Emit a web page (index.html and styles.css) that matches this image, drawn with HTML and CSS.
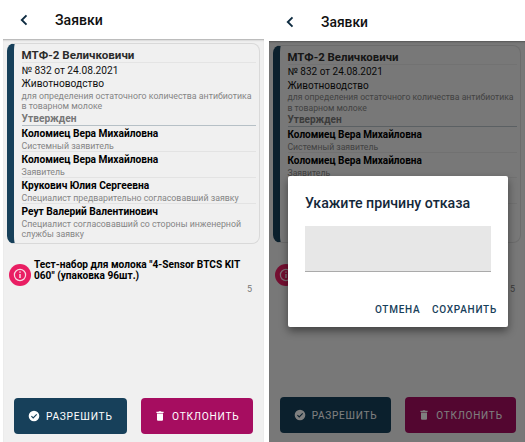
FILE: index.html
```html
<!DOCTYPE html>
<html lang="ru">
<head>
<meta charset="utf-8">
<title>Заявки</title>
<link rel="stylesheet" href="styles.css">
</head>
<body>
<main class="screens">
  <section class="phone">
    <header class="bar">
      <svg class="back" viewBox="0 0 8 12"><path d="M6.5 1.3 1.8 6l4.7 4.7"/></svg>
      <h1>Заявки</h1>
    </header>
    <div class="content">
      <article class="card">
        <h2 class="title"><span>МТФ-2 Величковичи</span></h2>
        <p class="line number"><span>№ 832 от 24.08.2021</span></p>
        <p class="line branch"><span>Животноводство</span></p>
        <p class="note purpose"><span>для определения остаточного количества антибиотика<br>в товарном молоке</span></p>
        <p class="status"><span>Утвержден</span></p>
        <div class="person"><b>Коломиец Вера Михайловна</b><p class="note">Системный заявитель</p></div>
        <div class="person"><b>Коломиец Вера Михайловна</b><p class="note">Заявитель</p></div>
        <div class="person"><b>Крукович Юлия Сергеевна</b><p class="note">Специалист предварительно согласовавший заявку</p></div>
        <div class="person last"><b>Реут Валерий Валентинович</b><p class="note">Специалист согласовавший со стороны инженерной<br>службы заявку</p></div>
      </article>
      <div class="item">
        <svg class="info" viewBox="0 0 22 22"><circle cx="11" cy="11" r="11" fill="#e91e63"/><circle cx="11" cy="11" r="5.6" fill="none" stroke="#f8dce5" stroke-width="1.2"/><path d="M11 10v4M11 7.5v1.3" stroke="#f8dce5" stroke-width="1.5"/></svg>
        <p>Тест-набор для молока "4-Sensor BTCS KIT<br>060" (упаковка 96шт.)</p>
      </div>
      <p class="qty">5</p>
      <div class="actions">
        <button class="btn allow"><svg viewBox="0 0 12 12"><circle cx="6" cy="6" r="5.3" fill="#fff"/><path d="m3.4 6.1 1.8 1.8 3.5-3.6" fill="none" stroke="#17405a" stroke-width="1.1"/></svg><span>РАЗРЕШИТЬ</span></button>
        <button class="btn deny"><svg viewBox="0 0 12 12"><path d="M2.4 1.8h2l.7-.6h1.8l.7.6h2V3H2.4zM3 3.6h6v6.1q0 1-1 1H4q-1 0-1-1z" fill="#fff"/></svg><span>ОТКЛОНИТЬ</span></button>
      </div>
    </div>
  </section>

  <section class="phone second">
    <header class="bar">
      <svg class="back" viewBox="0 0 8 12"><path d="M6.5 1.3 1.8 6l4.7 4.7"/></svg>
      <h1>Заявки</h1>
    </header>
    <div class="content">
      <article class="card">
        <h2 class="title"><span>МТФ-2 Величковичи</span></h2>
        <p class="line number"><span>№ 832 от 24.08.2021</span></p>
        <p class="line branch"><span>Животноводство</span></p>
        <p class="note purpose"><span>для определения остаточного количества антибиотика<br>в товарном молоке</span></p>
        <p class="status"><span>Утвержден</span></p>
        <div class="person"><b>Коломиец Вера Михайловна</b><p class="note">Системный заявитель</p></div>
        <div class="person"><b>Коломиец Вера Михайловна</b><p class="note">Заявитель</p></div>
        <div class="person blank"></div>
        <div class="person last blank"></div>
      </article>
      <div class="item">
        <svg class="info" viewBox="0 0 22 22"><circle cx="11" cy="11" r="11" fill="#e91e63"/><circle cx="11" cy="11" r="5.6" fill="none" stroke="#f8dce5" stroke-width="1.2"/><path d="M11 10v4M11 7.5v1.3" stroke="#f8dce5" stroke-width="1.5"/></svg>
      </div>
      <p class="qty">5</p>
      <div class="actions">
        <button class="btn allow"><svg viewBox="0 0 12 12"><circle cx="6" cy="6" r="5.3" fill="#fff"/><path d="m3.4 6.1 1.8 1.8 3.5-3.6" fill="none" stroke="#17405a" stroke-width="1.1"/></svg><span>РАЗРЕШИТЬ</span></button>
        <button class="btn deny"><svg viewBox="0 0 12 12"><path d="M2.4 1.8h2l.7-.6h1.8l.7.6h2V3H2.4zM3 3.6h6v6.1q0 1-1 1H4q-1 0-1-1z" fill="#fff"/></svg><span>ОТКЛОНИТЬ</span></button>
      </div>
    </div>
    <div class="scrim"></div>
    <div class="dialog">
      <h2>Укажите причину отказа</h2>
      <div class="field"></div>
      <div class="choices"><span>ОТМЕНА</span><span>СОХРАНИТЬ</span></div>
    </div>
  </section>
</main>
</body>
</html>
```
FILE: styles.css
```css
* { box-sizing: border-box; margin: 0; padding: 0; }
body { width: 525px; height: 442px; overflow: hidden; background: #fff; font-family: Roboto, sans-serif; color: #111; }
.screens { display: flex; gap: 5px; padding-left: 3px; height: 442px; }
.phone { --k: 1; --v: 1; --head: 39px; position: relative; width: 261px; height: 442px; overflow: hidden; display: flex; flex-direction: column; flex: none; }
.second { --k: .983; --v: .99; --head: 41px; width: 256px; }
.bar { height: var(--head); flex: none; display: flex; align-items: center; padding-left: 17px; background: #fff; }
.second .bar { padding-top: 3px; }
.back { width: 8px; height: 12px; fill: none; stroke: #0d2b40; stroke-width: 1.9; }
.bar h1 { margin-left: 27px; font-size: calc(14.1px * var(--k)); font-weight: 500; line-height: 16px; white-space: nowrap; }
.content { flex: 1; display: flex; flex-direction: column; background: #f0f0f0; box-shadow: inset 0 2px 2px -1px #aaa; padding: 3.5px 4px 0; }
.card { height: calc(201px * var(--v)); flex: none; border: 1px solid #d9d9d9; border-left: 7.5px solid #17405a; border-radius: 8px; padding: 0 3px 0 7.5px; white-space: nowrap; }
.title { height: calc(19.5px * var(--v)); line-height: calc(22.5px * var(--v)); font-size: calc(11.6px * var(--k)); font-weight: 700; color: #2c2c2c; border-bottom: 1px solid #e4e4e4; }
.line { font-size: calc(10.2px * var(--k)); height: calc(13.5px * var(--v)); line-height: calc(14px * var(--v)); }
.number { margin-top: .7px; }
.note { font-size: calc(8.8px * var(--k)); line-height: calc(10.4px * var(--v)); color: #858585; }
.purpose { height: calc(21.5px * var(--v)); }
.status { height: calc(14px * var(--v)); line-height: calc(14px * var(--v)); font-size: calc(10.2px * var(--k)); font-weight: 700; color: #777; border-bottom: 1px solid #b6c0c6; }
.person { height: calc(25.8px * var(--v)); border-bottom: 1px solid #e3e3e3; padding-top: 1px; }
.person b { display: block; font-size: calc(10.2px * var(--k)); line-height: calc(14px * var(--v)); color: #000; }
.last { border: 0; }
.item { margin: 14px 0 0 2px; height: 31px; display: flex; gap: 3px; }
.info { width: 22px; height: 22px; margin-top: 6px; flex: none; }
.second .item { margin-top: 15px; }
.item p { margin-top: 1px; font-size: 10.15px; font-weight: 700; line-height: 11.7px; white-space: nowrap; color: #000; }
.qty { text-align: right; padding-right: 8px; font-size: 9px; line-height: 10px; color: #777; margin-top: -5px; }
.second .qty { padding-right: 6px; }
.actions { margin: auto 7px 8px; display: grid; grid-template-columns: 1fr 1fr; gap: 14px; }
.second .actions { margin: auto 5px 9px 7px; }
.btn { height: 36px; border: 0; border-radius: 4px; color: #fff; font: 400 calc(10.2px * var(--k)) Roboto, sans-serif; letter-spacing: .75px; display: flex; align-items: center; justify-content: center; gap: 6px; }
.btn svg { width: 12px; height: 12px; flex: none; }
.allow { background: #17405a; }
.deny { background: #a60d60; }
.scrim { position: absolute; inset: 41px 0 0; background: rgba(0, 0, 0, .5); }
.dialog { position: absolute; left: 19px; top: 176px; width: 220px; height: 151px; background: #fff; border-radius: 2px; padding: 18px 17px 0; box-shadow: 0 4px 9px rgba(0, 0, 0, .45); display: flex; flex-direction: column; }
.dialog h2 { font-size: 14.2px; line-height: 18px; font-weight: 500; color: #14283a; white-space: nowrap; }
.field { height: 46px; margin-top: 14px; background: #e7e7e7; border-bottom: 1px solid #aaa; }
.choices { display: flex; justify-content: flex-end; gap: 11.5px; margin: 31px -6px 0 0; font-size: 10px; line-height: 14px; font-weight: 500; letter-spacing: .75px; color: #17405a; }
```
